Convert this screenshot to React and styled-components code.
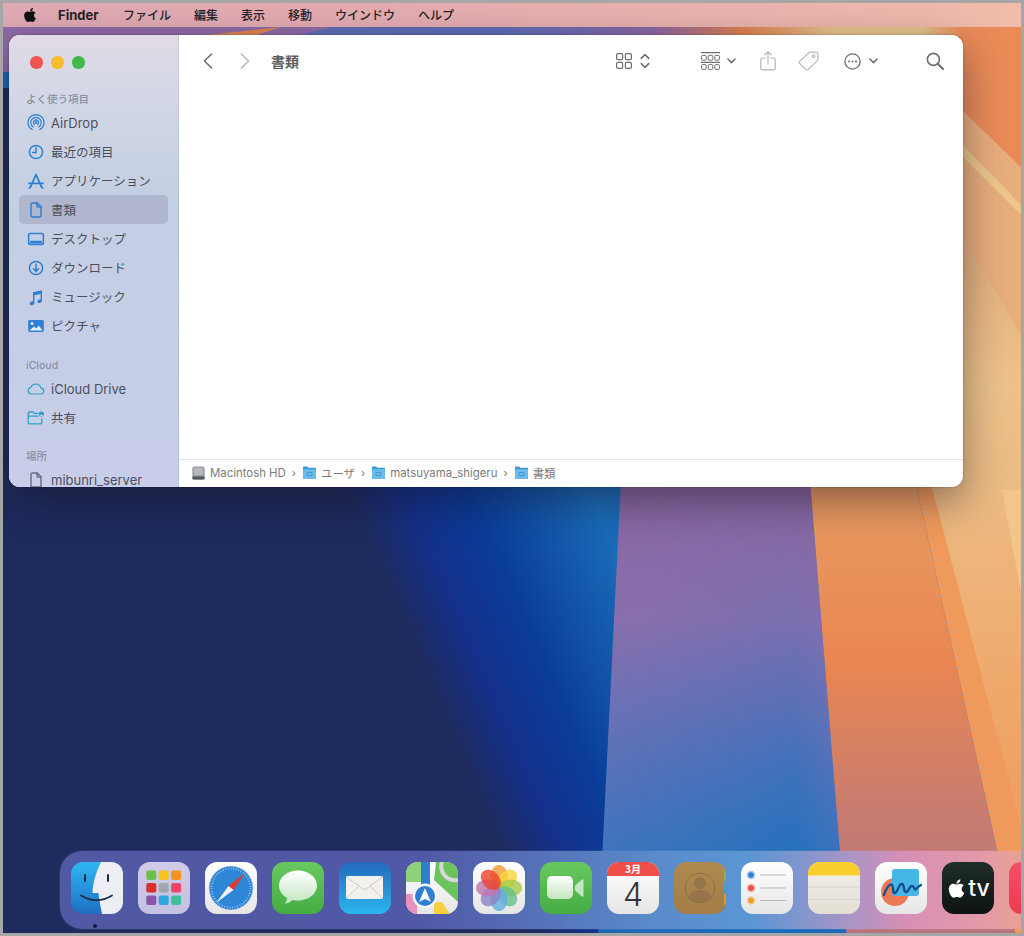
import React from "react";
import styled, { createGlobalStyle } from "styled-components";
import { FaApple } from "react-icons/fa";

const GlobalStyle = createGlobalStyle`
  html, body { margin: 0; padding: 0; background: #a6a6a6; }
  body { font-family: Inter, "Liberation Sans", "Noto Sans CJK JP", sans-serif; }
`;

const Frame = styled.div`
  width: 1024px;
  height: 936px;
  box-sizing: border-box;
  padding: 3px;
  background: #a6a6a6;
`;

const Screen = styled.div`
  position: relative;
  width: 1018px;
  height: 930px;
  overflow: hidden;
  display: flex;
  flex-direction: column;
`;

const WallpaperSvg = styled.svg`
  position: absolute;
  inset: 0;
  width: 1018px;
  height: 930px;
`;

const MenuBar = styled.div`
  position: relative;
  height: 24px;
  flex: none;
  box-sizing: border-box;
  padding: 0 0 1px 19px;
  display: flex;
  align-items: center;
  background: linear-gradient(90deg, #dfa9b3, #e4adb0 45%, #e9b4ad 75%, #f1bcaa);
  color: #26222a;
  font-size: 12px;
  font-family: "Noto Sans CJK JP", sans-serif;
`;

const AppleMark = styled(FaApple)`
  width: 16px;
  height: 16px;
  margin-right: 20px;
  color: #111;
`;

const MenuApp = styled.span`
  font-family: Inter, sans-serif;
  font-weight: 700;
  font-size: 13px;
  width: 65px;
`;

const MenuItem = styled.span`
  margin-right: 23px;
  font-weight: 500;
`;

const FinderWindow = styled.div`
  position: relative;
  flex: none;
  width: 954px;
  height: 452px;
  margin: 8px 0 0 6px;
  display: flex;
  border-radius: 11px;
  overflow: hidden;
  background: #fff;
  box-shadow: 0 14px 40px rgba(20, 15, 30, 0.45), 0 0 2px rgba(20, 15, 30, 0.4);
`;

const Sidebar = styled.aside`
  width: 170px;
  flex: none;
  overflow: hidden;
  background: linear-gradient(180deg, #e1dbe6 0, #d3d7e6 60px, #c3cfe3 160px, #c5cee6 300px, #c8cde9 100%);
  box-shadow: inset -1px 0 0 rgba(120, 120, 150, 0.18);
`;

const Lights = styled.div`
  height: 56px;
  box-sizing: border-box;
  padding: 21px 0 0 21px;
  display: flex;
  gap: 8.5px;
`;

const Light = styled.span`
  width: 12.5px;
  height: 12.5px;
  border-radius: 50%;
  background: ${p => p.$color};
`;

const SectionTitle = styled.div`
  height: 17px;
  line-height: 17px;
  margin-top: ${p => p.$top || 0}px;
  padding-left: 17px;
  font-size: 10.5px;
  font-weight: 500;
  color: #8b90a6;
`;

const SideRow = styled.div`
  height: 29px;
  margin: 0 11px 0 10px;
  padding-left: 8px;
  display: flex;
  align-items: center;
  gap: 6px;
  border-radius: 5px;
  font-size: ${p => (p.$latin ? 13 : 12.5)}px;
  color: #4c4f5c;
  background: ${p => (p.$active ? "#afb6cd" : "transparent")};
`;

const SideIcon = styled.svg`
  width: 18px;
  height: 18px;
  flex: none;
  color: ${p => p.$color || "#2f7fd3"};
`;

const Main = styled.main`
  flex: 1;
  display: flex;
  flex-direction: column;
  min-width: 0;
`;

const Toolbar = styled.div`
  height: 52px;
  flex: none;
  display: flex;
  align-items: center;
  color: #6e6e6e;
`;

const ToolSlot = styled.span`
  display: flex;
  margin-left: ${p => p.$gap}px;
`;

const Title = styled.span`
  margin-left: 21px;
  font-size: 14px;
  font-weight: 600;
  color: #5c5c5c;
  font-family: "Noto Sans CJK JP", sans-serif;
`;

const Pane = styled.div`
  flex: 1;
`;

const PathBar = styled.div`
  height: 28px;
  flex: none;
  box-sizing: border-box;
  border-top: 1px solid #e4e4e4;
  display: flex;
  align-items: center;
  padding: 0 0 2px 13px;
  font-size: 11.4px;
  color: #7b7b7b;
`;

const PathLabel = styled.span`
  margin-left: 5px;
`;

const PathSep = styled.span`
  margin: 0 7px 0 6px;
  font-size: 11px;
  color: #777;
`;

const Dock = styled.div`
  position: relative;
  flex: none;
  height: 78px;
  margin: auto 0 4px 57px;
  box-sizing: border-box;
  padding: 11px 0 0 11px;
  display: flex;
  gap: 15px;
  overflow: hidden;
  border-radius: 22px 0 0 22px;
  background: linear-gradient(90deg, #5158a4 0, #5159a6 38%, #5a8bcb 62%, #5b96d4 72%, #a895c6 82%, #d88fb5 88%, #e39aa8 96%, #e9a195 100%);
  box-shadow: 0 0 0 1px rgba(255, 255, 255, 0.06);
`;

const DockSlot = styled.div`
  width: 52px;
  height: 52px;
  flex: none;
`;

const RunDot = styled.span`
  position: absolute;
  left: 33px;
  bottom: 1px;
  width: 4px;
  height: 4px;
  border-radius: 50%;
  background: #15193a;
`;

const TvTile = styled.div`
  width: 52px;
  height: 52px;
  box-sizing: border-box;
  border-radius: 12px;
  background: linear-gradient(180deg, #1f2e2a, #0e1413);
  color: #fff;
  display: flex;
  align-items: center;
  justify-content: center;
  font-size: 23px;
  font-weight: 500;
  line-height: 1;
`;

const TvApple = styled(FaApple)`
  width: 21px;
  height: 21px;
  margin-right: 1px;
`;

const strokeProps = { fill: "none", stroke: "currentColor", strokeWidth: 1.5, strokeLinecap: "round", strokeLinejoin: "round" };

const Wallpaper = () => (
  <WallpaperSvg viewBox="3 3 1018 930">
    <defs>
      <linearGradient id="glow" gradientUnits="userSpaceOnUse" x1="370" y1="545" x2="577" y2="457">
        <stop offset="0" stopColor="#1e2b5e" />
        <stop offset="0.24" stopColor="#14308a" />
        <stop offset="0.5" stopColor="#0a3c98" />
        <stop offset="1" stopColor="#1a6cb8" />
      </linearGradient>
      <linearGradient id="band" x1="0" y1="0" x2="0" y2="1">
        <stop offset="0" stopColor="#8a66a0" />
        <stop offset="0.3" stopColor="#8b6fad" />
        <stop offset="0.55" stopColor="#6472b8" />
        <stop offset="0.8" stopColor="#3f74bd" />
        <stop offset="1" stopColor="#1f68b6" />
      </linearGradient>
      <linearGradient id="streak" x1="0" y1="0" x2="1" y2="0">
        <stop offset="0" stopColor="#1b6cba" stopOpacity="0" />
        <stop offset="0.78" stopColor="#136ebd" stopOpacity="0.75" />
        <stop offset="1" stopColor="#136ebd" stopOpacity="0" />
      </linearGradient>
      <linearGradient id="streakMask" x1="0" y1="0" x2="0" y2="1">
        <stop offset="0" stopColor="#fff" stopOpacity="0" />
        <stop offset="0.5" stopColor="#fff" stopOpacity="0.3" />
        <stop offset="1" stopColor="#fff" stopOpacity="1" />
      </linearGradient>
      <mask id="streakFade">
        <rect x="590" y="480" width="260" height="460" fill="url(#streakMask)" />
      </mask>
      <linearGradient id="orange" x1="0" y1="0" x2="0" y2="1">
        <stop offset="0" stopColor="#e99c62" />
        <stop offset="0.4" stopColor="#e98652" />
        <stop offset="0.72" stopColor="#c87c70" />
        <stop offset="1" stopColor="#b6747f" />
      </linearGradient>
      <linearGradient id="top" x1="0" y1="0" x2="1" y2="0">
        <stop offset="0" stopColor="#5c6cb4" />
        <stop offset="0.38" stopColor="#5e6cb4" />
        <stop offset="0.55" stopColor="#8a66a4" />
        <stop offset="0.66" stopColor="#e0804f" />
        <stop offset="0.76" stopColor="#e6c08a" />
        <stop offset="0.87" stopColor="#e4c48c" />
        <stop offset="0.92" stopColor="#ea8b57" />
        <stop offset="1" stopColor="#ea8b57" />
      </linearGradient>
      <linearGradient id="sideRay" gradientUnits="userSpaceOnUse" x1="0" y1="232" x2="0" y2="490">
        <stop offset="0" stopColor="#e3ad7d" />
        <stop offset="0.6" stopColor="#ecc28a" />
        <stop offset="1" stopColor="#ebbb84" />
      </linearGradient>
      <linearGradient id="wedge" gradientUnits="userSpaceOnUse" x1="0" y1="480" x2="0" y2="780">
        <stop offset="0" stopColor="#ebbb84" />
        <stop offset="0.5" stopColor="#efae72" />
        <stop offset="1" stopColor="#efa164" />
      </linearGradient>
    </defs>
    <rect x="0" y="0" width="1024" height="936" fill="url(#glow)" />
    <rect x="3" y="27" width="190" height="45" fill="#8e6ba6" />
    <rect x="3" y="72" width="10" height="16" fill="#1668b4" />
    <rect x="190" y="27" width="840" height="10" fill="url(#top)" />
    <polygon points="190,27 281,27 196,36 190,36" fill="#8e6ba6" />
    <polygon points="196,36 281,27 255,36" fill="#e2834f" />
    <polygon points="255,36 281,27 333,27 294,36" fill="#8e6ba6" />
    <polygon points="621,480 810,480 847,940 598,940" fill="url(#band)" />
    <polygon points="600,480 850,480 850,940 600,940" fill="url(#streak)" mask="url(#streakFade)" />
    <polygon points="810,480 915,480 1017,940 847,940" fill="url(#orange)" />
    <polygon points="915,480 1030,480 1030,940 1017,940" fill="#ef9a5c" />
    <polygon points="930,480 1030,480 1030,860" fill="url(#wedge)" />
    <polygon points="1000,480 1030,480 1030,640" fill="#f0c68b" />
    <rect x="960" y="37" width="70" height="450" fill="#ea8b57" />
    <polygon points="960,108 1030,176 1030,490 960,490" fill="#e7ad7c" />
    <polygon points="960,142 1030,214 1030,224 960,154" fill="#ecc68a" />
    <polygon points="960,232 1030,350 1030,490 960,490" fill="url(#sideRay)" />
  </WallpaperSvg>
);

const AirDropIcon = () => (
  <SideIcon viewBox="0 0 18 18" {...strokeProps} strokeWidth={1.2}>
    <path d="M5.2 15.6a8 8 0 1 1 7.6 0" />
    <path d="M6.2 12.9a5.2 5.2 0 1 1 5.6 0" />
    <path d="M7.4 10.6a2.6 2.6 0 1 1 3.2 0" />
    <circle cx="9" cy="8.6" r="0.8" fill="currentColor" />
  </SideIcon>
);

const ClockIcon = () => (
  <SideIcon viewBox="0 0 18 18" {...strokeProps}>
    <circle cx="9" cy="9" r="6.6" />
    <path d="M9 4.8V9.4H5.6" />
  </SideIcon>
);

const AppsIcon = () => (
  <SideIcon viewBox="0 0 18 18" {...strokeProps} strokeWidth={1.7}>
    <path d="M9 2.6 14.4 14.6" />
    <path d="M9 2.600 3.600 14.600" />
    <path d="M2 11.400H16" />
    <path d="M3.600 14.600 2.600 16M14.400 14.600 15.400 16" />
  </SideIcon>
);

const DocIcon = ({ color }) => (
  <SideIcon viewBox="0 0 18 18" {...strokeProps} $color={color}>
    <path d="M4 3.4a1.4 1.4 0 0 1 1.4-1.4h4.8L14 5.8v8.8a1.4 1.4 0 0 1-1.4 1.4H5.4A1.4 1.4 0 0 1 4 14.6Z" />
    <path d="M10 2v3a1 1 0 0 0 1 1h3" />
  </SideIcon>
);

const DesktopIcon = () => (
  <SideIcon viewBox="0 0 18 18" {...strokeProps}>
    <rect x="1.6" y="3.4" width="14.8" height="11.2" rx="1.8" />
    <rect x="3" y="10.8" width="12" height="2.6" rx="0.6" fill="currentColor" stroke="none" />
  </SideIcon>
);

const DownloadIcon = () => (
  <SideIcon viewBox="0 0 18 18" {...strokeProps}>
    <circle cx="9" cy="9" r="6.6" />
    <path d="M9 5.2v7M6.4 9.8 9 12.4l2.6-2.6" />
  </SideIcon>
);

const MusicIcon = () => (
  <SideIcon viewBox="0 0 18 18">
    <path fill="currentColor" d="M6 4.2 15 2.2V12.6c0 1.5-1.1 2.5-2.6 2.5-1.2 0-2-.7-2-1.7 0-1.1.9-1.8 2-2l1.2-.2V6L7.4 7.3v7.4c0 1.5-1.1 2.6-2.7 2.6-1.2 0-2-.7-2-1.8 0-1.1.9-1.8 2-2l1.3-.3Z" />
  </SideIcon>
);

const PictureIcon = () => (
  <SideIcon viewBox="0 0 18 18">
    <rect x="1.2" y="3" width="15.6" height="12" rx="1.4" fill="currentColor" />
    <circle cx="5" cy="6.6" r="1.5" fill="#e6edf8" />
    <path fill="#e6edf8" d="M2.4 13.6 7 9.6l2.4 2 2.4-3 3.8 5Z" />
  </SideIcon>
);

const CloudIcon = () => (
  <SideIcon viewBox="0 0 18 18" {...strokeProps} strokeWidth={1.2} $color="#35a5c4">
    <path d="M4.4 14a3.4 3.4 0 0 1-.6-6.7 5.4 5.4 0 0 1 10.2.9A2.9 2.9 0 0 1 13.8 14Z" />
  </SideIcon>
);

const SharedIcon = () => (
  <SideIcon viewBox="0 0 18 18" {...strokeProps} strokeWidth={1.3} $color="#2aa3c6">
    <path d="M11 4.4H7.4L6 3H2.4A1.2 1.2 0 0 0 1.2 4.2v9.4a1.2 1.2 0 0 0 1.2 1.2h11.2a1.2 1.2 0 0 0 1.2-1.2V10" />
    <path d="M1.2 7.2H11" />
    <circle cx="14.4" cy="5" r="2.6" fill="currentColor" stroke="none" />
    <circle cx="14.4" cy="4.2" r="0.8" fill="#c8d3e8" />
    <path d="M13.2 6.6h2.4" stroke="#c8d3e8" strokeWidth="1" />
  </SideIcon>
);

const BackIcon = () => (
  <svg width="10" height="16" viewBox="0 0 10 16" fill="none" stroke="currentColor" strokeWidth="1.6" strokeLinecap="round" strokeLinejoin="round">
    <path d="M8.6 1 1.4 8l7.2 7" />
  </svg>
);

const ForwardIcon = () => (
  <svg width="10" height="16" viewBox="0 0 10 16" fill="none" stroke="#b9b9b9" strokeWidth="1.6" strokeLinecap="round" strokeLinejoin="round">
    <path d="M1.4 1 8.6 8l-7.2 7" />
  </svg>
);

const GridIcon = () => (
  <svg width="16" height="16" viewBox="0 0 16 16" fill="none" stroke="currentColor" strokeWidth="1.2">
    <rect x="0.6" y="0.6" width="6" height="6" rx="1.3" />
    <rect x="9.4" y="0.6" width="6" height="6" rx="1.3" />
    <rect x="0.6" y="9.4" width="6" height="6" rx="1.3" />
    <rect x="9.4" y="9.4" width="6" height="6" rx="1.3" />
  </svg>
);

const UpDownIcon = () => (
  <svg width="10" height="16" viewBox="0 0 10 16" fill="none" stroke="currentColor" strokeWidth="1.5" strokeLinecap="round" strokeLinejoin="round">
    <path d="M1.2 5.4 5 1.6l3.8 3.8M1.2 10.6 5 14.4l3.8-3.8" />
  </svg>
);

const GroupIcon = () => (
  <svg width="19" height="18" viewBox="0 0 19 18" fill="none" stroke="currentColor" strokeWidth="1">
    <path d="M0 .6h19M0 10.400h19" strokeWidth="1.1" />
    <rect x="0.6" y="3.400" width="4.6" height="4.800" rx="1" />
    <rect x="7.2" y="3.400" width="4.6" height="4.800" rx="1" />
    <rect x="13.8" y="3.400" width="4.6" height="4.800" rx="1" />
    <rect x="0.6" y="12.600" width="4.6" height="4.800" rx="1" />
    <rect x="7.2" y="12.600" width="4.6" height="4.800" rx="1" />
    <rect x="13.8" y="12.600" width="4.6" height="4.800" rx="1" />
  </svg>
);

const DownIcon = () => (
  <svg width="9" height="6" viewBox="0 0 9 6" fill="none" stroke="currentColor" strokeWidth="1.5" strokeLinecap="round" strokeLinejoin="round">
    <path d="M.9 1 4.5 4.6 8.1 1" />
  </svg>
);

const ShareIcon = () => (
  <svg width="16" height="20" viewBox="0 0 16 20" fill="none" stroke="#b4b4b4" strokeWidth="1.2" strokeLinecap="round" strokeLinejoin="round">
    <path d="M5 7H2.4A1.6 1.6 0 0 0 .8 8.6v8.6a1.6 1.6 0 0 0 1.6 1.6h11.2a1.6 1.6 0 0 0 1.6-1.6V8.6A1.6 1.6 0 0 0 13.6 7H11" />
    <path d="M8 13V1M4.8 3.8 8 .8l3.2 3" />
  </svg>
);

const TagIcon = () => (
  <svg width="21" height="20" viewBox="0 0 21 20" fill="none" stroke="#b9b9b9" strokeWidth="1.2" strokeLinejoin="round">
    <path d="M11.6 1.2h6.6a1.6 1.6 0 0 1 1.6 1.6v6.6L9.9 18.6a1.4 1.4 0 0 1-2 0L1.6 12.4a1.4 1.4 0 0 1 0-2Z" />
    <circle cx="15.6" cy="5.2" r="1.3" />
  </svg>
);

const MoreIcon = () => (
  <svg width="17" height="17" viewBox="0 0 17 17" fill="none" stroke="currentColor" strokeWidth="1.3">
    <circle cx="8.5" cy="8.5" r="7.6" />
    <circle cx="5" cy="8.5" r="1" fill="currentColor" stroke="none" />
    <circle cx="8.5" cy="8.5" r="1" fill="currentColor" stroke="none" />
    <circle cx="12" cy="8.5" r="1" fill="currentColor" stroke="none" />
  </svg>
);

const SearchIcon = () => (
  <svg width="18" height="18" viewBox="0 0 18 18" fill="none" stroke="currentColor" strokeWidth="1.6" strokeLinecap="round">
    <circle cx="7.4" cy="7.4" r="6" />
    <path d="M11.8 11.8 17 17" strokeWidth="2" />
  </svg>
);

const DiskIcon = () => (
  <svg width="13" height="14" viewBox="0 0 13 14">
    <rect x="0.4" y="0.4" width="12.2" height="13.2" rx="2" fill="#8e9196" />
    <rect x="1.6" y="1.4" width="9.8" height="8" rx="1" fill="#b4b7bb" />
    <rect x="0.4" y="10.4" width="12.2" height="3.2" rx="1.2" fill="#55585c" />
  </svg>
);

const PathFolder = () => (
  <svg width="13" height="13" viewBox="0 0 13 13">
    <path fill="#3b9ad6" d="M0 1.6C0 1 .4.6 1 .6h3.2l1 1.2H12c.6 0 1 .4 1 1V12c0 .6-.4 1-1 1H1c-.6 0-1-.4-1-1Z" />
    <rect x="0" y="3.2" width="13" height="9.8" rx="1" fill="#6cbcea" />
    <rect x="4" y="6.4" width="5" height="3.4" rx="1" fill="none" stroke="#2f86c4" strokeWidth="0.8" />
  </svg>
);

const Tile = ({ bg, children }) => (
  <svg width="52" height="52" viewBox="0 0 52 52">
    <clipPath id={`clip-${bg}`}>
      <rect width="52" height="52" rx="12" />
    </clipPath>
    <g clipPath={`url(#clip-${bg})`}>
      <rect width="52" height="52" fill={`url(#${bg})`} />
      {children}
    </g>
  </svg>
);

const DockDefs = () => (
  <svg width="0" height="0" style={{ position: "absolute" }}>
    <defs>
      <linearGradient id="dWhite" x1="0" y1="0" x2="0" y2="1"><stop offset="0" stopColor="#fff" /><stop offset="1" stopColor="#e6e6e6" /></linearGradient>
      <linearGradient id="dFinder" x1="0" y1="0" x2="0" y2="1"><stop offset="0" stopColor="#2fb7f2" /><stop offset="1" stopColor="#1e6ec2" /></linearGradient>
      <linearGradient id="dPad" x1="0" y1="0" x2="0" y2="1"><stop offset="0" stopColor="#cfcbe8" /><stop offset="1" stopColor="#c4c2e2" /></linearGradient>
      <linearGradient id="dGreen" x1="0" y1="0" x2="0" y2="1"><stop offset="0" stopColor="#68c85f" /><stop offset="1" stopColor="#45ac43" /></linearGradient>
      <linearGradient id="dMail" x1="0" y1="0" x2="0" y2="1"><stop offset="0" stopColor="#2469bd" /><stop offset="1" stopColor="#2ab6ee" /></linearGradient>
      <linearGradient id="dBubble" x1="0" y1="0" x2="0" y2="1"><stop offset="0" stopColor="#fff" /><stop offset="1" stopColor="#c3e6c0" /></linearGradient>
      <linearGradient id="dContacts" x1="0" y1="0" x2="0" y2="1"><stop offset="0" stopColor="#ae8a50" /><stop offset="1" stopColor="#a37c46" /></linearGradient>
      <linearGradient id="dNotes" x1="0" y1="0" x2="0" y2="1"><stop offset="0" stopColor="#f4f1ea" /><stop offset="1" stopColor="#e2ded4" /></linearGradient>
      <linearGradient id="dMusic" x1="0" y1="0" x2="0" y2="1"><stop offset="0" stopColor="#f2506a" /><stop offset="1" stopColor="#ee3a50" /></linearGradient>
    </defs>
  </svg>
);

const FinderTile = () => (
  <Tile bg="dFinder">
    <path fill="#eceef3" d="M30 0H52V52H31C29.500 44 28 37 27.500 31H21.500C22 19 26 8 30 0Z" />
    <path d="M14 13v6M37 13v6" stroke="#1c2b44" strokeWidth="2" strokeLinecap="round" />
    <path d="M10 33.500Q25.500 43 41 33.500" fill="none" stroke="#1c2b44" strokeWidth="1.700" strokeLinecap="round" />
  </Tile>
);

const padCells = [
  "#6cc04a", "#f8c31e", "#f5921e",
  "#d8302a", "#a0a8ac", "#ee4468",
  "#8d55a8", "#2ba6e0", "#3fc09a",
];

const LaunchpadTile = () => (
  <Tile bg="dPad">
    {padCells.map((c, i) => (
      <rect key={c} x={8.300 + (i % 3) * 12.400} y={8.600 + Math.floor(i / 3) * 12.400} width="10" height="9.500" rx="2" fill={c} />
    ))}
  </Tile>
);

const SafariTile = () => (
  <Tile bg="dWhite">
    <circle cx="26" cy="26" r="22" fill="#2f86d6" stroke="#cfd6de" strokeWidth="0.600" />
    <circle cx="26" cy="26" r="19.500" fill="none" stroke="#bfe0f6" strokeWidth="2" strokeDasharray="0.600 2" />
    <polygon points="40,11 23.500,24 28.500,28" fill="#e5392f" />
    <polygon points="11,41 23.500,24 28.500,28" fill="#f2f2f2" />
  </Tile>
);

const MessagesTile = () => (
  <Tile bg="dGreen">
    <path fill="url(#dBubble)" d="M26 8.500c10.500 0 19 6.700 19 15s-8.500 15-19 15c-1.900 0-3.700-.2-5.400-.6-2 2-4.700 3.300-7.800 3.600 1.300-1.500 2.200-3.300 2.500-5.500C10.200 33.400 7 28.800 7 23.500c0-8.300 8.500-15 19-15Z" />
  </Tile>
);

const MailTile = () => (
  <Tile bg="dMail">
    <rect x="7" y="14" width="37" height="23" rx="2" fill="#f2f1ee" />
    <path d="M7.500 15 25.500 28 43.500 15M7.500 36 20 24M43.500 36 31 24" fill="none" stroke="#c6c6c6" strokeWidth="0.900" />
  </Tile>
);

const MapsTile = () => (
  <Tile bg="dWhite">
    <rect x="0" y="0" width="16" height="20" fill="#8fd27a" />
    <polygon points="30,0 52,0 52,40 28,18" fill="#6cc45c" />
    <path d="M36 0a14 14 0 0 0 16 18" fill="none" stroke="#d8d8d8" strokeWidth="4" />
    <rect x="0" y="32" width="11" height="20" fill="#e890bf" />
    <polygon points="28,40 36,40 44,52 28,52" fill="#f8cf3c" />
    <rect x="15" y="0" width="9" height="24" fill="#2f7fd0" />
    <circle cx="19" cy="34" r="12.500" fill="#f2f4f7" />
    <circle cx="19" cy="34" r="10" fill="#2f7fd0" />
    <polygon points="19,26 25,40 19,37 13,40" fill="#f4f6fa" />
  </Tile>
);

const petals = ["#f39a33", "#f6d33c", "#a8cc47", "#66bf8c", "#62aee0", "#8c82c8", "#c274ae", "#e8432f"];

const PhotosTile = () => (
  <Tile bg="dWhite">
    {petals.map((c, i) => (
      <ellipse key={c} cx="26" cy="14.500" rx="8.500" ry="11.500" fill={c} opacity="0.8" transform={`rotate(${i * 45} 26 26)`} />
    ))}
  </Tile>
);

const FaceTimeTile = () => (
  <Tile bg="dGreen">
    <rect x="7" y="14" width="26" height="23" rx="5" fill="url(#dBubble)" />
    <path d="M35 23.500 42 17.500c.8-.6 1.500-.3 1.500.7v15.600c0 1-.7 1.300-1.500.7L35 28.500Z" fill="#c3e6c0" />
  </Tile>
);

const CalendarTile = () => (
  <Tile bg="dWhite">
    <rect width="52" height="14" fill="#ee4f48" />
    <text x="26" y="11" textAnchor="middle" fontSize="10" fontWeight="700" fill="#fff" fontFamily="'Noto Sans CJK JP', sans-serif">3月</text>
    <text x="26" y="44" textAnchor="middle" fontSize="32" fontWeight="300" fill="#333" fontFamily="Inter, sans-serif">4</text>
  </Tile>
);

const ContactsTile = () => (
  <Tile bg="dContacts">
    <circle cx="26" cy="26" r="15" fill="none" stroke="#8f6e42" strokeWidth="1" />
    <circle cx="26" cy="21" r="6" fill="#96744a" />
    <path d="M14.500 35c2-5.500 6.500-7 11.500-7s9.500 1.500 11.500 7a15 15 0 0 1-23 0Z" fill="#96744a" />
    <rect x="50" y="8" width="2" height="11" fill="#8fae5a" />
    <rect x="50" y="20" width="2" height="11" fill="#3fa5c8" />
    <rect x="50" y="32" width="2" height="11" fill="#e8902c" />
  </Tile>
);

const ReminderLine = ({ y, color }) => (
  <>
    <circle cx="10" cy={y} r="4.200" fill={color} opacity="0.4" />
    <circle cx="10" cy={y} r="2.700" fill={color} />
    <path d={`M19 ${y}H45`} stroke="#b9b9b9" strokeWidth="1" />
  </>
);

const RemindersTile = () => (
  <Tile bg="dWhite">
    <ReminderLine y={13} color="#2f7fd8" />
    <ReminderLine y={26} color="#ea4a3f" />
    <ReminderLine y={38.500} color="#f39a22" />
  </Tile>
);

const NotesTile = () => (
  <Tile bg="dNotes">
    <rect width="52" height="13.500" fill="#f9cf2e" />
    <path d="M0 25H52M0 37.500H52" stroke="#d2cfc6" strokeWidth="0.800" />
  </Tile>
);

const FreeformTile = () => (
  <Tile bg="dWhite">
    <circle cx="20" cy="30" r="14" fill="#ec7a58" />
    <rect x="17" y="7" width="27" height="27" rx="3" fill="#45b6e6" />
    <path d="M9 33c2-7 6-12 8-10s0 9 3 8 4-10 7-9 1 8 4 8 3-6 6-6 2 5 4 3 3-3 5-4" fill="none" stroke="#16508c" strokeWidth="2.400" strokeLinecap="round" />
  </Tile>
);

const MusicTile = () => <Tile bg="dMusic" />;

export default function App() {
  return (
    <Frame>
      <GlobalStyle />
      <DockDefs />
      <Screen>
        <Wallpaper />
        <MenuBar>
          <AppleMark />
          <MenuApp>Finder</MenuApp>
          <MenuItem>ファイル</MenuItem>
          <MenuItem>編集</MenuItem>
          <MenuItem>表示</MenuItem>
          <MenuItem>移動</MenuItem>
          <MenuItem>ウインドウ</MenuItem>
          <MenuItem>ヘルプ</MenuItem>
        </MenuBar>

        <FinderWindow>
          <Sidebar>
            <Lights>
              <Light $color="#f2544f" />
              <Light $color="#fbbb2e" />
              <Light $color="#3fba4a" />
            </Lights>
            <SectionTitle>よく使う項目</SectionTitle>
            <SideRow $latin><AirDropIcon />AirDrop</SideRow>
            <SideRow><ClockIcon />最近の項目</SideRow>
            <SideRow><AppsIcon />アプリケーション</SideRow>
            <SideRow $active><DocIcon />書類</SideRow>
            <SideRow><DesktopIcon />デスクトップ</SideRow>
            <SideRow><DownloadIcon />ダウンロード</SideRow>
            <SideRow><MusicIcon />ミュージック</SideRow>
            <SideRow><PictureIcon />ピクチャ</SideRow>
            <SectionTitle $top={17}>iCloud</SectionTitle>
            <SideRow $latin><CloudIcon />iCloud Drive</SideRow>
            <SideRow><SharedIcon />共有</SideRow>
            <SectionTitle $top={16}>場所</SectionTitle>
            <SideRow $latin><DocIcon color="#6d7080" />mibunri_server</SideRow>
          </Sidebar>

          <Main>
            <Toolbar>
              <ToolSlot $gap={24}><BackIcon /></ToolSlot>
              <ToolSlot $gap={27}><ForwardIcon /></ToolSlot>
              <Title>書類</Title>
              <ToolSlot $gap={317}><GridIcon /></ToolSlot>
              <ToolSlot $gap={8}><UpDownIcon /></ToolSlot>
              <ToolSlot $gap={51}><GroupIcon /></ToolSlot>
              <ToolSlot $gap={7}><DownIcon /></ToolSlot>
              <ToolSlot $gap={24}><ShareIcon /></ToolSlot>
              <ToolSlot $gap={22}><TagIcon /></ToolSlot>
              <ToolSlot $gap={25}><MoreIcon /></ToolSlot>
              <ToolSlot $gap={8}><DownIcon /></ToolSlot>
              <ToolSlot $gap={48}><SearchIcon /></ToolSlot>
            </Toolbar>
            <Pane />
            <PathBar>
              <DiskIcon />
              <PathLabel>Macintosh HD</PathLabel>
              <PathSep>›</PathSep>
              <PathFolder />
              <PathLabel>ユーザ</PathLabel>
              <PathSep>›</PathSep>
              <PathFolder />
              <PathLabel>matsuyama_shigeru</PathLabel>
              <PathSep>›</PathSep>
              <PathFolder />
              <PathLabel>書類</PathLabel>
            </PathBar>
          </Main>
        </FinderWindow>

        <Dock>
          <DockSlot><FinderTile /></DockSlot>
          <DockSlot><LaunchpadTile /></DockSlot>
          <DockSlot><SafariTile /></DockSlot>
          <DockSlot><MessagesTile /></DockSlot>
          <DockSlot><MailTile /></DockSlot>
          <DockSlot><MapsTile /></DockSlot>
          <DockSlot><PhotosTile /></DockSlot>
          <DockSlot><FaceTimeTile /></DockSlot>
          <DockSlot><CalendarTile /></DockSlot>
          <DockSlot><ContactsTile /></DockSlot>
          <DockSlot><RemindersTile /></DockSlot>
          <DockSlot><NotesTile /></DockSlot>
          <DockSlot><FreeformTile /></DockSlot>
          <DockSlot><TvTile><TvApple />tv</TvTile></DockSlot>
          <DockSlot><MusicTile /></DockSlot>
          <RunDot />
        </Dock>
      </Screen>
    </Frame>
  );
}
